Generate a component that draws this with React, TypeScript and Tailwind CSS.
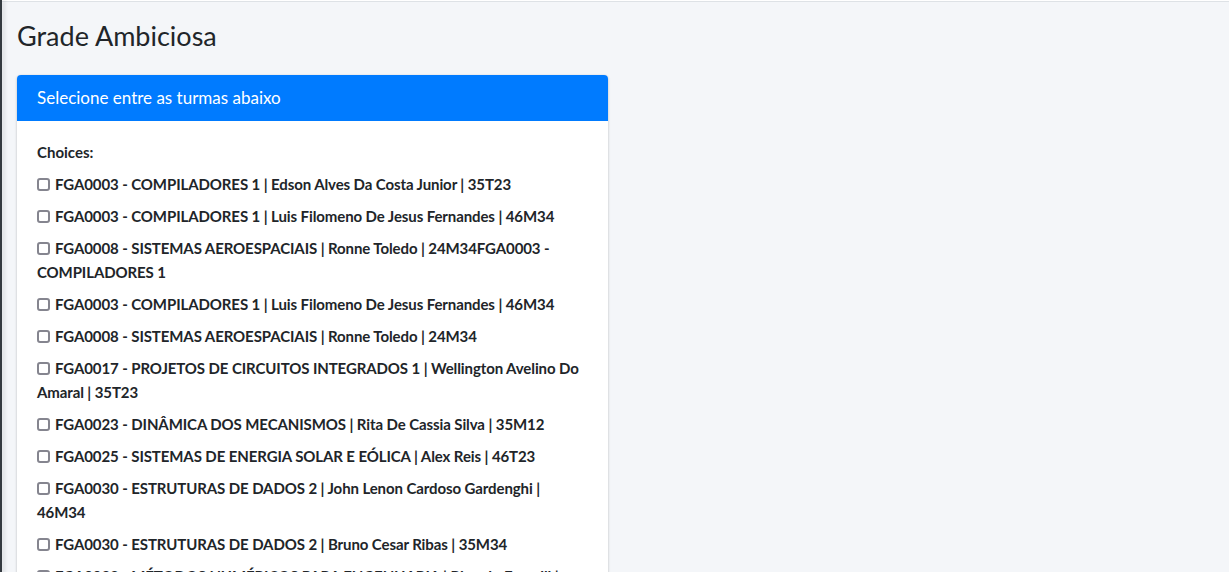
import React from "react";

const turmas = [
  "FGA0003 - COMPILADORES 1 | Edson Alves Da Costa Junior | 35T23",
  "FGA0003 - COMPILADORES 1 | Luis Filomeno De Jesus Fernandes | 46M34",
  "FGA0008 - SISTEMAS AEROESPACIAIS | Ronne Toledo | 24M34FGA0003 - COMPILADORES 1",
  "FGA0003 - COMPILADORES 1 | Luis Filomeno De Jesus Fernandes | 46M34",
  "FGA0008 - SISTEMAS AEROESPACIAIS | Ronne Toledo | 24M34",
  "FGA0017 - PROJETOS DE CIRCUITOS INTEGRADOS 1 | Wellington Avelino Do Amaral | 35T23",
  "FGA0023 - DINÂMICA DOS MECANISMOS | Rita De Cassia Silva | 35M12",
  "FGA0025 - SISTEMAS DE ENERGIA SOLAR E EÓLICA | Alex Reis | 46T23",
  "FGA0030 - ESTRUTURAS DE DADOS 2 | John Lenon Cardoso Gardenghi | 46M34",
  "FGA0030 - ESTRUTURAS DE DADOS 2 | Bruno Cesar Ribas | 35M34",
  "FGA0033 - MÉTODOS NUMÉRICOS PARA ENGENHARIA | Ricardo Fragelli | 35M12",
];

const Choice: React.FC<{ label: string }> = ({ label }) => (
  <div className="mb-2 leading-6 font-bold text-[15px] tracking-[-0.1px]">
    <span className="inline-block w-[13px] h-[13px] mr-[5px] align-[-1px] rounded-[3px] border-2 border-[#85858f] bg-white" />
    {label}
  </div>
);

export default function App() {
  return (
    <div className="flex min-h-screen bg-[#f4f6f9] text-[#212529] font-['Lato',sans-serif]">
      <aside className="w-[2px] shrink-0 bg-[#343a40] shadow-[2px_0_4px_rgba(0,0,0,0.18)] z-10" />
      <main className="flex-1">
        <div className="h-[2px] bg-white border-b border-[#dee2e6]" />
        <div className="px-[15px]">
          <h1 className="pt-[17px] text-[27px] leading-[34px] font-normal">Grade Ambiciosa</h1>
          <div className="mt-[22px] w-[591px] rounded bg-white shadow-[0_0_1px_rgba(0,0,0,0.125),0_1px_3px_rgba(0,0,0,0.2)]">
            <div className="h-[46px] flex items-center px-5 rounded-t bg-[#007bff] text-white text-[17px]">
              Selecione entre as turmas abaixo
            </div>
            <div className="px-5 pt-[19px] pb-5">
              <div className="mb-2 leading-6 font-bold text-[15px]">Choices:</div>
              {turmas.map((t, i) => (
                <Choice key={i} label={t} />
              ))}
            </div>
          </div>
        </div>
      </main>
    </div>
  );
}
